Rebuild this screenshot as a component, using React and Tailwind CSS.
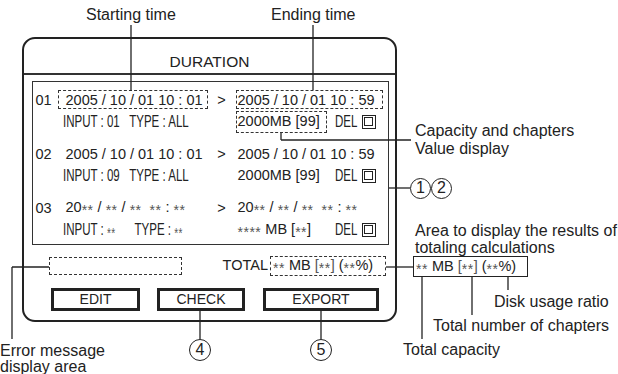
import React from "react";

function Ast({ n = 2 }) {
  return (
    <span className="text-[14px] text-[#555] align-[-3px] leading-none tracking-[0.5px]">
      {"*".repeat(n)}
    </span>
  );
}

function Narrow({ children, w }) {
  return (
    <div className="shrink-0" style={{ width: w }}>
      <span className="inline-block origin-left scale-x-[0.72] text-[16px] whitespace-pre">{children}</span>
    </div>
  );
}

function CheckBox() {
  return (
    <div className="w-[14px] h-[14px] border-[1.5px] border-[#222] p-[1.5px]">
      <div className="w-full h-full border-[1.5px] border-[#222]" />
    </div>
  );
}

function Entry({ num, start, end, input, type, cap, dashed, gap = "   " }) {
  const b = dashed ? "border border-dashed border-[#333]" : "border border-transparent";
  return (
    <div className="flex flex-col">
      <div className="flex items-center h-[20px] text-[14.5px] leading-[18px]">
        <div className="w-[24.5px] pl-[2.5px]">{num}</div>
        <div className={`w-[150px] h-[19px] flex items-center pl-[7px] ${b}`}>
          <span className="whitespace-pre">{start}</span>
        </div>
        <div className="w-[28px] text-center">&gt;</div>
        <div className={`w-[147px] h-[19px] flex items-center pl-[1px] ${b}`}>
          <span className="whitespace-pre">{end}</span>
        </div>
      </div>
      <div className="flex items-center h-[22px] mt-[1px]">
        <div className="w-[202.5px] pl-[29.5px] flex">
          <Narrow>
            {"INPUT : "}{input}{gap}{"TYPE : "}{type}
          </Narrow>
        </div>
        <div className={`w-[91px] h-[22px] flex items-center pl-[1px] text-[14.5px] ${b}`}>
          <span className="whitespace-pre">{cap}</span>
        </div>
        <div className="ml-[8px]">
          <Narrow w={27}>DEL</Narrow>
        </div>
        <CheckBox />
      </div>
    </div>
  );
}

function TotalText() {
  return (
    <span className="whitespace-pre">
      <Ast />{" MB "}<span className="text-[#555]">[</span><Ast /><span className="text-[#555]">]</span>{" ("}<Ast />{"%)"}
    </span>
  );
}

function Circle({ x, y, d = 21, children }) {
  return (
    <div
      className="absolute rounded-full border-[1.3px] border-[#222] flex items-center justify-center text-[16px] leading-none bg-white"
      style={{ left: x - d / 2, top: y - d / 2, width: d, height: d }}
    >
      {children}
    </div>
  );
}

function Label({ x, y, children }) {
  return (
    <div
      className="absolute text-[16px] leading-[18px] whitespace-nowrap"
      style={{ left: x, top: y - 9 }}
    >
      {children}
    </div>
  );
}

export default function App() {
  const lines = [
    [131, 25, 131, 91],
    [313, 25, 313, 90],
    [281, 133, 281, 140],
    [281, 140, 411, 140],
    [389, 188, 410, 188],
    [386, 267, 413, 267],
    [422, 277, 422, 339],
    [472, 277, 472, 315],
    [508, 277, 508, 290],
    [12, 267, 49, 267],
    [12, 267, 12, 339],
    [200, 311, 200, 339],
    [321, 311, 321, 339],
  ];
  const stars = (
    <>
      {"20"}<Ast />{" / "}<Ast />{" / "}<Ast />{"  "}<Ast />{" : "}<Ast />
    </>
  );
  return (
    <div className="w-[618px] h-[374px] relative overflow-hidden bg-white text-[#222] font-['Liberation_Sans',Arial,sans-serif] pt-[37px] pl-[22px]">
      <div className="w-[375px] h-[285px] border-2 border-[#222] rounded-[13px] flex flex-col">
        <div className="h-[34px] pt-[14px] text-center text-[15.5px] leading-[18px]">DURATION</div>
        <div className="h-[1.5px] bg-[#333]" />
        <div className="mt-[6.5px] ml-[8px] mr-[6px] h-[164px] border-[1.5px] border-[#333] pt-[7.5px] flex flex-col gap-[11px]">
          <Entry num="01" start="2005 / 10 / 01 10 : 01" end="2005 / 10 / 01 10 : 59" input="01" type="ALL" cap="2000MB [99]" dashed />
          <Entry num="02" start="2005 / 10 / 01 10 : 01" end="2005 / 10 / 01 10 : 59" input="09" type="ALL" cap="2000MB [99]" />
          <Entry
            num="03"
            start={stars}
            end={stars}
            input={<Ast />}
            type={<Ast />}
            gap="      "
            cap={<><Ast n={4} />{" MB ["}<Ast />{"]"}</>}
          />
        </div>
        <div className="mt-[11px] h-[20px] flex items-center">
          <div className="ml-[25px] w-[133px] h-[18px] border border-dashed border-[#333]" />
          <div className="ml-auto flex items-center mr-[9px]">
            <div className="text-[14.5px] mr-[2px]">TOTAL</div>
            <div className="w-[116px] h-[20px] border border-dashed border-[#333] flex items-center pl-[2px] text-[14.5px]">
              <TotalText />
            </div>
          </div>
        </div>
        <div className="mt-[12px] ml-[27px] flex gap-[17px]">
          <div className="w-[89px] h-[23px] border-[3px] border-[#222] flex items-center justify-center text-[14px]">EDIT</div>
          <div className="w-[88px] h-[23px] border-[3px] border-[#222] flex items-center justify-center text-[14px]">CHECK</div>
          <div className="ml-[1px] w-[116px] h-[23px] border-[3px] border-[#222] flex items-center justify-center text-[14px]">EXPORT</div>
        </div>
      </div>

      <svg className="absolute inset-0 pointer-events-none" width="618" height="374">
        {lines.map(([x1, y1, x2, y2], i) => (
          <line key={i} x1={x1} y1={y1} x2={x2} y2={y2} stroke="#222" strokeWidth="1.3" />
        ))}
      </svg>

      <Label x={86} y={15}>Starting time</Label>
      <Label x={271} y={15}>Ending time</Label>
      <Label x={415} y={131}>Capacity and chapters</Label>
      <Label x={415} y={149}>Value display</Label>
      <Label x={415} y={231}>Area to display the results of</Label>
      <Label x={415} y={248}>totaling calculations</Label>
      <Label x={494} y={302}>Disk usage ratio</Label>
      <Label x={433} y={326}>Total number of chapters</Label>
      <Label x={403} y={350}>Total capacity</Label>
      <Label x={0} y={351}>Error message</Label>
      <Label x={0} y={367}>display area</Label>

      <div className="absolute left-[413px] top-[256px] w-[115px] h-[21px] border-[1.3px] border-[#222] flex items-center pl-[2px] text-[14.5px] bg-white">
        <TotalText />
      </div>

      <Circle x={420.5} y={188}>1</Circle>
      <Circle x={441.5} y={188}>2</Circle>
      <Circle x={200} y={350} d={22}>4</Circle>
      <Circle x={321} y={350} d={22}>5</Circle>
    </div>
  );
}
